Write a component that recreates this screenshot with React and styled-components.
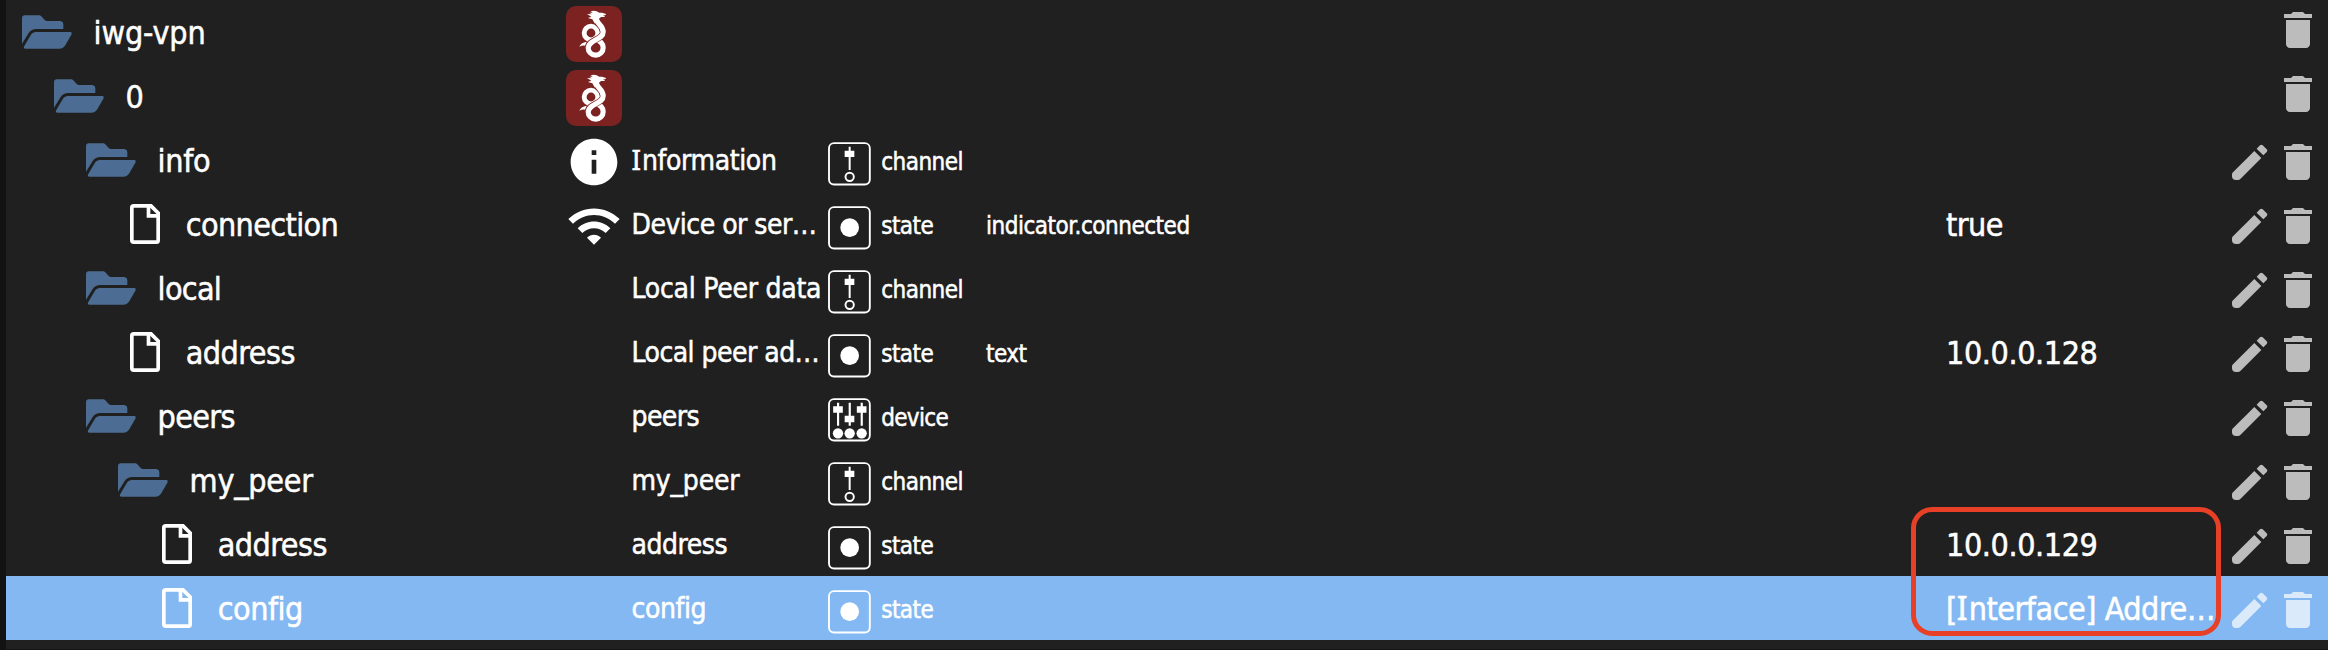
import React from 'react';
import styled, { createGlobalStyle } from 'styled-components';

const GlobalStyle = createGlobalStyle`
  body {
    margin: 0;
    background: #202020;
  }
`;

const Page = styled.div`
  position: relative;
  box-sizing: border-box;
  width: 2328px;
  height: 650px;
  overflow: hidden;
  background: #202020;
  border-left: 6px solid #121212;
  border-bottom: 1px solid #181316;
  color: #fff;
  font-family: 'DejaVu Sans Condensed', 'DejaVu Sans', sans-serif;
  -webkit-text-stroke: 0.5px currentColor;
`;

const Row = styled.div`
  display: flex;
  height: 64px;
  white-space: nowrap;
  background: ${p => (p.$selected ? '#84b8f2' : 'transparent')};
`;

const NameCell = styled.div`
  box-sizing: border-box;
  flex: none;
  display: flex;
  width: 560px;
  padding-left: ${p => 16 + p.$level * 32}px;
  font-size: 32px;
  line-height: 66px;
`;

const FolderSvg = styled.svg`
  flex: none;
  width: 50px;
  height: 34px;
  margin: 15px 21.6px 0 0;
`;

const FileSvg = styled.svg`
  flex: none;
  width: 30px;
  height: 40px;
  margin: 12px 25.7px 0 12px;
`;

const IconCell = styled.div`
  flex: none;
  width: 65.5px;
  padding-top: 6px;
`;

const ObjectSvg = styled.svg`
  display: block;
  width: 56px;
  height: 56px;
`;

const DescCell = styled.div`
  flex: none;
  width: 196.5px;
  font-size: 28px;
  line-height: 66px;
`;

const TypeCell = styled.div`
  flex: none;
  display: flex;
  gap: 10.5px;
  width: 158px;
  font-size: 24px;
  line-height: 68px;
`;

const TypeSvg = styled.svg`
  flex: none;
  width: 42.67px;
  height: 43.33px;
  margin-top: 14.33px;
`;

const RoleCell = styled.div`
  flex: 1;
  font-size: 24px;
  line-height: 68px;
`;

const ValueCell = styled.div`
  flex: none;
  width: 286px;
  font-size: 32px;
  line-height: 66px;
`;

const Actions = styled.div`
  box-sizing: border-box;
  flex: none;
  display: flex;
  justify-content: flex-end;
  width: 96px;
  padding: ${p => (p.$raised ? 12 : 16)}px 16px 0 0;
  gap: 16px;
  color: rgba(255, 255, 255, 0.7);
`;

const EditSvg = styled.svg`
  width: 36px;
  height: 36px;
`;

const DeleteSvg = styled.svg`
  width: 28px;
  height: 36px;
`;

const Label = styled.span`
  letter-spacing: ${p => p.$track}em;
`;

const SerifI = styled.span`
  font-family: 'Noto Sans', sans-serif;
  line-height: 0;
  letter-spacing: 0.034em;
`;

const Highlight = styled.div`
  position: absolute;
  box-sizing: border-box;
  left: 1905px;
  top: 507px;
  width: 310px;
  height: 129px;
  border: 5px solid #e84026;
  border-radius: 21px;
`;

const TRACKING = {
  'iwg-vpn': -0.004,
  '0': 0,
  info: -0.01,
  connection: -0.019,
  local: -0.022,
  address: -0.017,
  peers: -0.021,
  my_peer: -0.008,
  config: -0.015,
  Information: -0.0136,
  'Device or ser…': -0.018,
  'Local Peer data': -0.009,
  'Local peer ad…': -0.019,
  channel: -0.021,
  state: -0.022,
  device: -0.027,
  'indicator.connected': -0.02,
  text: -0.021,
  true: -0.017,
  '[Interface] Addre…': -0.015,
};

function Text({ children }) {
  if (!children) return null;
  const track = TRACKING[children] ?? -0.013;
  const at = children.indexOf('I');
  return (
    <Label $track={track}>
      {at < 0 ? (
        children
      ) : (
        <>
          {children.slice(0, at)}
          <SerifI>I</SerifI>
          {children.slice(at + 1)}
        </>
      )}
    </Label>
  );
}

const FolderIcon = () => (
  <FolderSvg viewBox="0 0 150 102" fill="#4d6c93">
    <path d="M0 9Q0 1 9 1H51Q55 1 58 4L68 15Q71 18 75 18H113Q124 18 124 29V42H43Q28 42 20 54L0 86Z" />
    <path d="M42 51H144Q152 51 148 59L129 92Q123 101 113 101H11Q3 101 7 93L26 61Q32 51 42 51Z" />
  </FolderSvg>
);

const FileIcon = () => (
  <FileSvg viewBox="0 0 90 120" fill="none" stroke="#fff" strokeWidth="11">
    <path d="M11 5.5H63L84.5 27V108.5Q84.5 114.500 79 114.500H11Q5.500 114.500 5.500 109V11Q5.500 5.500 11 5.500Z" />
    <path d="M55.500 6V35.500H84" />
  </FileSvg>
);

const VpnLogo = () => (
  <ObjectSvg viewBox="0 0 168 168">
    <rect width="168" height="168" rx="30" fill="#7c2322" />
    <g fill="none" stroke="#fff">
      <circle cx="75" cy="81" r="20.5" strokeWidth="14.5" />
      <circle cx="89" cy="125" r="22.5" strokeWidth="15.5" />
      <path d="M91 46C97 56 111.500 60 111.500 78C111.500 102 68 100 67 125" stroke="#7c2322" strokeWidth="19.5" />
      <path d="M89 38C93 54 111.500 58 111.500 78C111.500 102 68 100 66.500 126" strokeWidth="15.5" />
    </g>
    <path
      fill="#fff"
      d="M74 16Q84 13 92 16L100 20L108 20L120 24L119 27L110 27L118 30L114 33L105 33L99 38Q100 44 106 50L86 52L79 40L66 36L76 32L63 24L77 25L70 20L80 20Z"
    />
    <path fill="#fff" d="M40 122Q44 110 62 107L57 119Q48 118 40 122Z" />
  </ObjectSvg>
);

const InfoIcon = () => (
  <ObjectSvg viewBox="0 0 24 24" fill="#fff">
    <path d="M12 2C6.48 2 2 6.48 2 12s4.48 10 10 10 10-4.48 10-10S17.52 2 12 2zm1 15h-2v-6h2v6zm0-8h-2V7h2v2z" />
  </ObjectSvg>
);

const WifiIcon = () => (
  <ObjectSvg viewBox="0 0 24 24" fill="#fff">
    <path d="M1 9l2 2c4.97-4.97 13.03-4.97 18 0l2-2C16.93 2.93 7.08 2.93 1 9zm8 8l3 3 3-3c-1.65-1.66-4.34-1.66-6 0zm-4-4l2 2c2.76-2.76 7.24-2.76 10 0l2-2C15.14 9.14 8.87 9.14 5 13z" />
  </ObjectSvg>
);

const OBJECT_ICONS = { vpn: VpnLogo, info: InfoIcon, wifi: WifiIcon };

function TypeIcon({ type }) {
  return (
    <TypeSvg viewBox="0 0 128 130" fill="#fff">
      <rect x="3" y="3.5" width="122.5" height="124" rx="15" fill="none" stroke="#fff" strokeWidth="5.6" />
      {type === 'state' && <circle cx="65" cy="65" r="28" />}
      {type === 'channel' && (
        <>
          <path d="M62 14h6v70h-6zM50 26h29v19H50z" />
          <circle cx="65" cy="104.5" r="12.5" fill="none" stroke="#fff" strokeWidth="5.8" />
        </>
      )}
      {type === 'device' && (
        <>
          <path d="M27 14h6.500v69h-6.500zM15.500 25h29v19h-29zM62 14h6.500v69h-6.500zM50 53.500h29v19H50zM98 14h6.500v69h-6.500zM86.500 25h29v19h-29z" />
          <circle cx="30" cy="106" r="15.5" />
          <circle cx="65" cy="106" r="15.5" />
          <circle cx="101" cy="106" r="15.5" />
        </>
      )}
    </TypeSvg>
  );
}

const EditIcon = () => (
  <EditSvg viewBox="0 0 108 108" fill="currentColor">
    <path d="M67 21L88 42L25 105Q22 108 18 108H12Q0 108 0 96V90Q0 88 3 85Z" />
    <path d="M74 14L84 4Q88 0 92 4L104 16Q108 20 104 24L94 34Z" />
  </EditSvg>
);

const DeleteIcon = () => (
  <DeleteSvg viewBox="5 3 14 18" fill="currentColor">
    <path d="M6 19c0 1.1.9 2 2 2h8c1.1 0 2-.9 2-2V7H6v12zM19 4h-3.5l-1-1h-5l-1 1H5v2h14V4z" />
  </DeleteSvg>
);

const ROWS = [
  { name: 'iwg-vpn', level: 0, folder: true, icon: 'vpn' },
  { name: '0', level: 1, folder: true, icon: 'vpn' },
  { name: 'info', level: 2, folder: true, icon: 'info', desc: 'Information', type: 'channel' },
  {
    name: 'connection',
    level: 3,
    icon: 'wifi',
    desc: 'Device or ser…',
    type: 'state',
    role: 'indicator.connected',
    value: 'true',
  },
  { name: 'local', level: 2, folder: true, desc: 'Local Peer data', type: 'channel' },
  { name: 'address', level: 3, desc: 'Local peer ad…', type: 'state', role: 'text', value: '10.0.0.128' },
  { name: 'peers', level: 2, folder: true, desc: 'peers', type: 'device' },
  { name: 'my_peer', level: 3, folder: true, desc: 'my_peer', type: 'channel' },
  { name: 'address', level: 4, desc: 'address', type: 'state', value: '10.0.0.129' },
  { name: 'config', level: 4, desc: 'config', type: 'state', value: '[Interface] Addre…', selected: true },
];

function ObjectRow({ row }) {
  const ObjectIcon = OBJECT_ICONS[row.icon];
  return (
    <Row $selected={row.selected}>
      <NameCell $level={row.level}>
        {row.folder ? <FolderIcon /> : <FileIcon />}
        <Text>{row.name}</Text>
      </NameCell>
      <IconCell>{ObjectIcon && <ObjectIcon />}</IconCell>
      <DescCell>
        <Text>{row.desc}</Text>
      </DescCell>
      <TypeCell>
        {row.type && <TypeIcon type={row.type} />}
        <Text>{row.type}</Text>
      </TypeCell>
      <RoleCell>
        <Text>{row.role}</Text>
      </RoleCell>
      <ValueCell>
        <Text>{row.value}</Text>
      </ValueCell>
      <Actions $raised={!row.type}>
        {row.type && <EditIcon />}
        <DeleteIcon />
      </Actions>
    </Row>
  );
}

export default function App() {
  return (
    <>
      <GlobalStyle />
      <Page>
        {ROWS.map((row, i) => (
          <ObjectRow key={i} row={row} />
        ))}
        <Highlight />
      </Page>
    </>
  );
}
